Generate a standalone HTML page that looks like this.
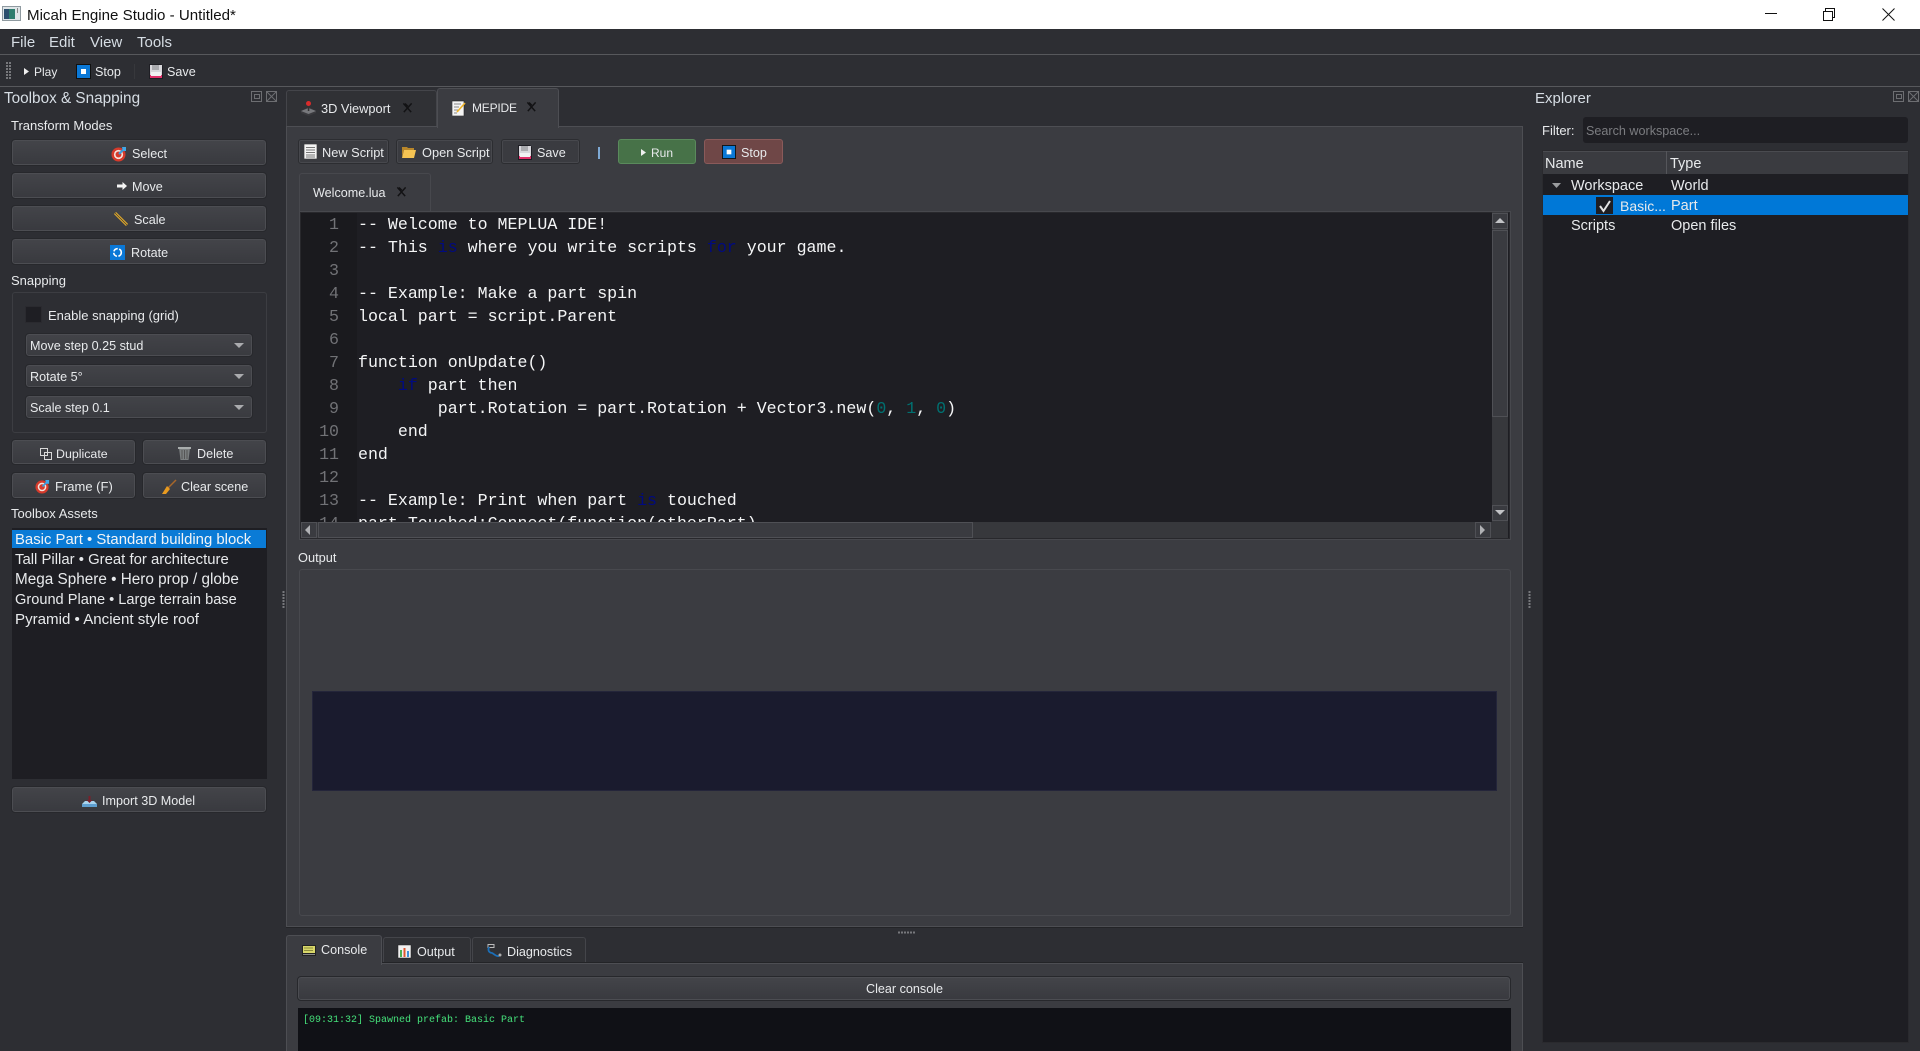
<!DOCTYPE html>
<html><head><meta charset="utf-8"><title>Micah Engine Studio</title>
<style>
html,body{margin:0;padding:0;width:1920px;height:1051px;overflow:hidden;background:#2d2e33}
body{position:relative;font-family:"Liberation Sans",sans-serif;font-size:12.6px;color:#e8eaec}
.b,.t,.i{position:absolute;box-sizing:border-box}
.t{white-space:nowrap;line-height:20px;height:20px;margin-top:1px}
.l{font-size:13px}
.btn{position:absolute;box-sizing:border-box;border:1px solid #4c4d52;border-radius:3px;background:linear-gradient(#434449,#393a3f);outline:1px solid #27282c}
.btn.f{border-color:#2c2d31;box-shadow:inset 0 0 0 1px #47484d;outline:0}
.combo{position:absolute;box-sizing:border-box;left:26px;width:226px;height:22px;border:1px solid #4c4d52;border-radius:3px;background:linear-gradient(#424348,#3a3b40);outline:1px solid #27282c}
.arrow{position:absolute;left:234px;width:0;height:0;border-left:5px solid transparent;border-right:5px solid transparent;border-top:5px solid #aaabae}
.sb{position:absolute;box-sizing:border-box;background:#3a3b40;border:1px solid #4f5055}
svg{position:absolute;overflow:visible}
pre{margin:0;font-family:"Liberation Mono",monospace}
</style></head><body>
<svg width="0" height="0" style="position:absolute"><defs>
<symbol id="target" viewBox="0 0 16 16"><circle cx="7.5" cy="8.5" r="7" fill="#d63a2b"/><circle cx="7.5" cy="8.5" r="4.6" fill="#f3e3dc"/><circle cx="7.5" cy="8.5" r="3" fill="#d63a2b"/><path d="M8 8L13 3" stroke="#3a9ad9" stroke-width="2"/><path d="M11 1h4v4h-3z" fill="#3fa7e8"/></symbol>
<symbol id="stop" viewBox="0 0 15 15"><rect width="15" height="15" fill="#111"/><rect x="1" y="1" width="13" height="13" fill="#0a78d7"/><rect x="5" y="5" width="5" height="5" fill="#fff"/></symbol>
<symbol id="save" viewBox="0 0 14 15"><path d="M0 0h12l2 2v13H0z" fill="#1e1e24"/><rect x="1" y="1" width="12" height="13" fill="#d8d8dc"/><rect x="3" y="1" width="7" height="5" fill="#a9aaae"/><rect x="1" y="11" width="12" height="3" fill="#e0306a"/><rect x="2" y="8" width="10" height="4" fill="#f1f1f3"/></symbol>
<symbol id="doc" viewBox="0 0 13 15"><rect width="13" height="15" fill="#f4f4f4" stroke="#222" stroke-width=".6"/><path d="M2 3.5h9M2 6h9M2 8.5h9M2 11h9M2 13h9" stroke="#777" stroke-width="1"/></symbol>
<symbol id="folder" viewBox="0 0 14 12"><path d="M0 1h5l1 1h6v2H2L0 11z" fill="#b8862a"/><path d="M2 4h12l-2 8H0z" fill="#f6c453"/></symbol>
<symbol id="joy" viewBox="0 0 15 15"><path d="M0 10l7.500-4 7.500 4v2l-7.500 3L0 12z" fill="#3a3a3e"/><path d="M0 10l7.500-3 7.500 3-7.500 3z" fill="#77787c"/><rect x="6.800" y="3" width="1.500" height="7" fill="#333"/><circle cx="7.500" cy="2.500" r="2.500" fill="#d92b2b"/></symbol>
<symbol id="memo" viewBox="0 0 14 16"><rect y="1" width="12" height="15" fill="#f4f4f4" stroke="#222" stroke-width=".6"/><path d="M2 4h7M2 7h5M2 10h4M2 13h3" stroke="#888"/><path d="M5 12L13 3" stroke="#f0b429" stroke-width="1.600"/></symbol>
<symbol id="pin" viewBox="0 0 12 12"><path d="M1.500 1.500L10 11M2 11L10.500 1.500" stroke="#121214" stroke-width="1.600" fill="none"/><path d="M6 5L3 2" stroke="#121214" stroke-width="2.400"/></symbol>
</defs></svg>

<!-- title bar -->
<div class="b" style="left:0;top:0;width:1920px;height:29px;background:#fff"></div>
<svg style="left:2px;top:6px" width="19" height="15"><rect x=".5" y=".5" width="18" height="14" fill="#dfe5e8" stroke="#8f9aa0"/><rect x="2" y="3" width="11" height="10" fill="#2e7d6e"/><rect x="2" y="3" width="5" height="10" fill="#2c4f6e"/><rect x="15" y="2" width="1" height="5" fill="#888"/></svg>
<div class="t" style="left:27px;top:5px;color:#111;font-size:15.100px">Micah Engine Studio - Untitled*</div>
<svg style="left:1765px;top:8px" width="130" height="13" fill="none" stroke="#111"><path d="M0 5.500H12"/><path d="M58.500 3.500h9v9h-9zM60.500 3V.5h9v9H68"/><path d="M117.500.5l12 12M129.500.5l-12 12"/></svg>

<!-- menu -->
<div class="b" style="left:0;top:54px;width:1920px;height:1px;background:#57585c"></div>
<div class="t" style="left:11px;top:32px;font-size:15px;color:#d6dde4">File</div>
<div class="t" style="left:49px;top:32px;font-size:15px;color:#d6dde4">Edit</div>
<div class="t" style="left:90px;top:32px;font-size:15px;color:#d6dde4">View</div>
<div class="t" style="left:137px;top:32px;font-size:15px;color:#d6dde4">Tools</div>

<!-- toolbar -->
<div class="b" style="left:0;top:86px;width:1920px;height:1px;background:#57585c"></div>
<svg style="left:6px;top:62px" width="6" height="17"><path d="M1 0v17M4 0v17" stroke="#77787c" stroke-width="2" stroke-dasharray="2 1"/></svg>
<svg style="left:24px;top:68px" width="6" height="7"><path d="M0 0l5 3.500L0 7z" fill="#f0f0f0"/></svg>
<div class="t" style="left:34px;top:61px;font-size:12px">Play</div>
<svg style="left:76px;top:64px" width="15" height="15"><use href="#stop"/></svg>
<div class="t" style="left:95px;top:61px">Stop</div>
<div class="b" style="left:134px;top:64px;width:1px;height:15px;background:#37383c"></div>
<svg style="left:149px;top:64px" width="14" height="15"><use href="#save"/></svg>
<div class="t" style="left:167px;top:61px">Save</div>

<!-- left dock -->
<div class="t" style="left:4px;top:88px;font-size:15.300px;color:#d6dde4">Toolbox &amp; Snapping</div>
<svg style="left:251px;top:91px" width="26" height="12" fill="none" stroke="#6d6e72"><path d="M.5 .5h10v10H.5zM3.500 3.500h5v4h-5z"/><path d="M15.500 .5h10v10h-10zM16 1l9 9M25 1l-9 9"/></svg>
<div class="t l" style="left:11px;top:115px">Transform Modes</div>
<div class="btn" style="left:12px;top:140px;width:254px;height:25px"></div>
<svg style="left:111px;top:146px" width="16" height="16"><use href="#target"/></svg>
<div class="t" style="left:132px;top:143px">Select</div>
<div class="btn" style="left:12px;top:173px;width:254px;height:25px"></div>
<svg style="left:117px;top:182px" width="10" height="8"><path d="M0 2.500h5.500V0L10 4 5.500 8V5.500H0z" fill="#f4f4f4"/></svg>
<div class="t" style="left:132px;top:176px">Move</div>
<div class="btn" style="left:12px;top:206px;width:254px;height:25px"></div>
<svg style="left:114px;top:212px" width="14" height="14"><path d="M1 1l12 12" stroke="#e0a92c" stroke-width="3"/><path d="M1 1l12 12" stroke="#333" stroke-width=".6"/></svg>
<div class="t" style="left:134px;top:209px">Scale</div>
<div class="btn" style="left:12px;top:239px;width:254px;height:25px"></div>
<svg style="left:110px;top:245px" width="15" height="15"><rect width="15" height="15" fill="#0a78d7"/><circle cx="7.500" cy="7.500" r="3.800" fill="none" stroke="#fff" stroke-width="1.600" stroke-dasharray="5 1.500"/></svg>
<div class="t" style="left:131px;top:242px">Rotate</div>

<div class="t l" style="left:11px;top:270px">Snapping</div>
<div class="b" style="left:12px;top:292px;width:255px;height:141px;border:1px solid #3c3d42;border-radius:3px"></div>
<div class="b" style="left:25px;top:306px;width:17px;height:17px;background:#1e1e23;border:1px solid #2a2a2f"></div>
<div class="t l" style="left:48px;top:305px">Enable snapping (grid)</div>
<div class="combo" style="top:334px"></div><div class="t" style="left:30px;top:335px">Move step 0.25 stud</div><div class="arrow" style="top:343px"></div>
<div class="combo" style="top:365px"></div><div class="t" style="left:30px;top:366px">Rotate 5°</div><div class="arrow" style="top:374px"></div>
<div class="combo" style="top:396px"></div><div class="t" style="left:30px;top:397px">Scale step 0.1</div><div class="arrow" style="top:405px"></div>

<div class="btn" style="left:12px;top:440px;width:123px;height:24px"></div>
<svg style="left:40px;top:448px" width="12" height="12" fill="none" stroke="#d8d8d8"><rect x=".5" y=".5" width="7" height="7"/><rect x="4.500" y="4.500" width="7" height="7"/></svg>
<div class="t" style="left:56px;top:443px;font-size:12.400px">Duplicate</div>
<div class="btn" style="left:143px;top:440px;width:123px;height:24px"></div>
<svg style="left:178px;top:446px" width="13" height="14"><path d="M1 2h11l-1.500 12h-8z" fill="#7b7f80"/><rect width="13" height="2" y="1" fill="#a9adad"/><path d="M4 4v9M6.500 4v9M9 4v9" stroke="#555"/></svg>
<div class="t" style="left:197px;top:443px">Delete</div>
<div class="btn" style="left:12px;top:473px;width:123px;height:25px"></div>
<svg style="left:35px;top:479px" width="15" height="15"><use href="#target"/></svg>
<div class="t l" style="left:55px;top:476px">Frame (F)</div>
<div class="btn" style="left:143px;top:473px;width:123px;height:25px"></div>
<svg style="left:162px;top:479px" width="15" height="15"><path d="M14 1L6 9" stroke="#a8672a" stroke-width="1.500"/><path d="M5 7l3 3-4 5H0z" fill="#e89a20"/></svg>
<div class="t" style="left:181px;top:476px">Clear scene</div>

<div class="t l" style="left:11px;top:503px">Toolbox Assets</div>
<div class="b" style="left:12px;top:528px;width:255px;height:251px;background:#1e1e23"></div>
<div class="b" style="left:12px;top:530px;width:254px;height:18px;background:#0a7bd6"></div>
<div class="t" style="left:15px;top:529px;font-size:14.900px;color:#f2f4f6">Basic Part • Standard building block</div>
<div class="t" style="left:15px;top:549px;font-size:14.900px">Tall Pillar • Great for architecture</div>
<div class="t" style="left:15px;top:569px;font-size:15.300px">Mega Sphere • Hero prop / globe</div>
<div class="t" style="left:15px;top:589px;font-size:14.600px">Ground Plane • Large terrain base</div>
<div class="t" style="left:15px;top:609px;font-size:15.100px">Pyramid • Ancient style roof</div>
<div class="btn" style="left:12px;top:787px;width:254px;height:25px"></div>
<svg style="left:82px;top:796px" width="15" height="11"><path d="M0 8h15v3H0z" fill="#5f9fd0"/><path d="M3 5h9l3 3H0z" fill="#a9d4ee"/><rect x="6.500" y="0" width="2" height="6" fill="#7a1f2a"/><path d="M4.500 4h6l-3 3z" fill="#7a1f2a"/></svg>
<div class="t" style="left:102px;top:790px">Import 3D Model</div>

<svg style="left:282px;top:591px" width="3" height="18"><path d="M1.500 0v18" stroke="#77787c" stroke-width="2" stroke-dasharray="2 1"/></svg>

<!-- main tabs -->
<div class="b" style="left:286px;top:90px;width:151px;height:37px;background:#303135;border:1px solid #44454a;border-bottom:0;border-radius:3px 3px 0 0"></div>
<svg style="left:301px;top:101px" width="15" height="15"><use href="#joy"/></svg>
<div class="t" style="left:321px;top:98px;font-size:12.800px">3D Viewport</div>
<svg style="left:402px;top:102px" width="11" height="11"><use href="#pin"/></svg>
<div class="b" style="left:286px;top:126px;width:1237px;height:801px;background:#3b3c41;border:1px solid #4d4e53;box-shadow:0 1px 0 #232427"></div>
<div class="b" style="left:437px;top:88px;width:122px;height:40px;background:#3b3c41;border:1px solid #4d4e53;border-bottom:0;border-radius:3px 3px 0 0"></div>
<svg style="left:452px;top:100px" width="14" height="16"><use href="#memo"/></svg>
<div class="t" style="left:472px;top:97px;font-size:12px;letter-spacing:-.2px">MEPIDE</div>
<svg style="left:526px;top:101px" width="11" height="11"><use href="#pin"/></svg>

<!-- editor toolbar -->
<div class="btn f" style="left:298px;top:139px;width:91px;height:25px;background:#3a3b40"></div>
<svg style="left:304px;top:144px" width="13" height="15"><use href="#doc"/></svg>
<div class="t" style="left:322px;top:142px;font-size:12.800px">New Script</div>
<div class="btn f" style="left:396px;top:139px;width:97px;height:25px;background:#3a3b40"></div>
<svg style="left:402px;top:146px" width="14" height="12"><use href="#folder"/></svg>
<div class="t" style="left:422px;top:142px;font-size:12.800px">Open Script</div>
<div class="btn f" style="left:501px;top:139px;width:79px;height:25px;background:#3a3b40"></div>
<svg style="left:518px;top:145px" width="14" height="15"><use href="#save"/></svg>
<div class="t" style="left:537px;top:142px">Save</div>
<div class="b" style="left:598px;top:147px;width:2px;height:12px;background:#7ea9d4"></div>
<div class="btn" style="left:618px;top:139px;width:78px;height:25px;background:#477248;border-color:#5a8a5c;outline:0"></div>
<svg style="left:641px;top:149px" width="6" height="7"><path d="M0 0l5 3.500L0 7z" fill="#f0f0f0"/></svg>
<div class="t" style="left:651px;top:142px;font-size:12px">Run</div>
<div class="btn" style="left:704px;top:139px;width:79px;height:25px;background:#6f4747;border-color:#8a5a5a;outline:0"></div>
<svg style="left:722px;top:145px" width="14" height="14"><use href="#stop"/></svg>
<div class="t" style="left:741px;top:142px">Stop</div>

<!-- inner tab -->
<div class="b" style="left:299px;top:173px;width:132px;height:39px;background:#3b3c41;border:1px solid #47484d;border-bottom:0;border-radius:3px 3px 0 0"></div>
<div class="t" style="left:313px;top:182px">Welcome.lua</div>
<svg style="left:396px;top:186px" width="11" height="11"><use href="#pin"/></svg>

<!-- editor -->
<div class="b" style="left:299px;top:211px;width:1212px;height:329px;background:#1e1e23;border:1px solid #47484d;box-shadow:inset 0 0 0 1px #28282c;overflow:hidden">
<div class="b" style="left:1px;top:1px;width:56px;height:310px;background:#1a1a1e"></div>
<pre class="b" style="left:1px;top:1px;width:38px;height:310px;overflow:hidden;text-align:right;font-size:16.600px;line-height:23px;color:#717276">1
2
3
4
5
6
7
8
9
10
11
12
13
14</pre>
<pre class="b" style="left:58px;top:1px;width:1130px;height:309px;overflow:hidden;font-size:16.630px;line-height:23px;color:#f4f5f6">-- Welcome to MEPLUA IDE!
-- This <span style="color:#000a80">is</span> where you write scripts <span style="color:#000a80">for</span> your game.

-- Example: Make a part spin
local part = script.Parent

function onUpdate()
    <span style="color:#000a80">if</span> part then
        part.Rotation = part.Rotation + Vector3.new(<span style="color:#007070">0</span>, <span style="color:#007070">1</span>, <span style="color:#007070">0</span>)
    end
end

-- Example: Print when part <span style="color:#000a80">is</span> touched
part.Touched:Connect(function(otherPart)</pre>
</div>
<!-- scrollbars -->
<div class="b" style="left:301px;top:522px;width:1207px;height:16px;background:#37383c"></div>
<div class="b" style="left:1492px;top:212px;width:16px;height:310px;background:#37383c"></div>
<div class="sb" style="left:301px;top:522px;width:16px;height:16px"></div>
<svg style="left:305px;top:525px" width="6" height="10"><path d="M5 0v10L0 5z" fill="#b0b1b4"/></svg>
<div class="sb" style="left:318px;top:522px;width:655px;height:16px"></div>
<div class="sb" style="left:1475px;top:522px;width:16px;height:16px"></div>
<svg style="left:1480px;top:525px" width="6" height="10"><path d="M0 0v10L5 5z" fill="#b0b1b4"/></svg>
<div class="sb" style="left:1492px;top:213px;width:16px;height:16px"></div>
<svg style="left:1495px;top:218px" width="10" height="6"><path d="M0 5h10L5 0z" fill="#c2c3c6"/></svg>
<div class="sb" style="left:1492px;top:230px;width:16px;height:187px"></div>
<div class="sb" style="left:1492px;top:505px;width:16px;height:16px"></div>
<svg style="left:1495px;top:510px" width="10" height="6"><path d="M0 0h10L5 5z" fill="#c2c3c6"/></svg>

<!-- output -->
<div class="t l" style="left:298px;top:547px;font-size:12.800px">Output</div>
<div class="b" style="left:299px;top:569px;width:1212px;height:347px;border:1px solid #48494e;border-radius:3px"></div>
<div class="b" style="left:312px;top:691px;width:1185px;height:100px;background:#1a1b2e;border:1px solid #24253a"></div>

<svg style="left:898px;top:931px" width="18" height="3"><path d="M0 1.500h18" stroke="#77787c" stroke-width="2" stroke-dasharray="2 1"/></svg>
<svg style="left:1528px;top:591px" width="3" height="18"><path d="M1.500 0v18" stroke="#77787c" stroke-width="2" stroke-dasharray="2 1"/></svg>

<!-- bottom tabs -->
<div class="b" style="left:383px;top:937px;width:88px;height:27px;background:#303135;border:1px solid #44454a;border-bottom:0;border-radius:3px 3px 0 0"></div>
<div class="b" style="left:472px;top:937px;width:114px;height:27px;background:#303135;border:1px solid #44454a;border-bottom:0;border-radius:3px 3px 0 0"></div>
<div class="b" style="left:286px;top:963px;width:1237px;height:90px;background:#3b3c41;border:1px solid #4d4e53;box-shadow:0 -1px 0 #232427"></div>
<div class="b" style="left:286px;top:935px;width:96px;height:30px;background:#3b3c41;border:1px solid #4d4e53;border-bottom:0;border-radius:3px 3px 0 0"></div>
<svg style="left:302px;top:945px" width="14" height="11"><rect width="14" height="11" fill="#222"/><rect x="1" y="1" width="12" height="7" fill="#d9d86a"/><path d="M2 3h9M2 5.500h9" stroke="#8c8c3a"/><rect x="1" y="9" width="12" height="1" fill="#888"/></svg>
<div class="t" style="left:321px;top:939px">Console</div>
<svg style="left:398px;top:945px" width="13" height="13"><rect width="13" height="13" fill="#f0f0f0" stroke="#222" stroke-width=".5"/><rect x="2" y="5" width="2" height="7" fill="#4caf50"/><rect x="5.500" y="3" width="2" height="9" fill="#e0572e"/><rect x="9" y="6" width="2" height="6" fill="#3f8fd6"/></svg>
<div class="t" style="left:417px;top:941px">Output</div>
<svg style="left:487px;top:944px" width="15" height="15" fill="none"><rect x="1" y="0.500" width="6" height="3" stroke="#bbb"/><path d="M2 3c-2 5 2 6 3 6s4 4 7 3" stroke="#1b6fb8" stroke-width="1.800"/><circle cx="13" cy="11" r="1.500" fill="#aaa"/></svg>
<div class="t" style="left:507px;top:941px">Diagnostics</div>

<div class="btn" style="left:298px;top:977px;width:1212px;height:23px"></div>
<div class="t" style="left:866px;top:978px">Clear console</div>
<div class="b" style="left:298px;top:1008px;width:1213px;height:43px;background:#101116"></div>
<pre class="t" style="left:303px;top:1010px;font-size:10px;color:#45e07a">[09:31:32] Spawned prefab: Basic Part</pre>

<!-- right dock -->
<div class="t" style="left:1535px;top:88px;font-size:15px;color:#d6dde4">Explorer</div>
<svg style="left:1893px;top:91px" width="26" height="12" fill="none" stroke="#6d6e72"><path d="M.5 .5h10v10H.5zM3.500 3.500h5v4h-5z"/><path d="M15.500 .5h10v10h-10zM16 1l9 9M25 1l-9 9"/></svg>
<div class="t" style="left:1542px;top:120px;font-size:13px">Filter:</div>
<div class="b" style="left:1583px;top:117px;width:325px;height:26px;background:#1e1e23;border-radius:3px"></div>
<div class="t" style="left:1586px;top:120px;color:#7b7c80">Search workspace...</div>
<div class="b" style="left:1542px;top:150px;width:367px;height:893px;background:#1e1e23;border:1px solid #2a2a2e"></div>
<div class="b" style="left:1543px;top:151px;width:365px;height:23px;background:#3a3b40;border-top:1px solid #4a4b50"></div>
<div class="b" style="left:1666px;top:151px;width:1px;height:23px;background:#55565b"></div>
<div class="t" style="left:1545px;top:153px;font-size:14.500px">Name</div>
<div class="t" style="left:1670px;top:153px;font-size:14.500px">Type</div>
<svg style="left:1552px;top:183px" width="9" height="5"><path d="M0 0h9L4.500 5z" fill="#9b9c9f"/></svg>
<div class="t" style="left:1571px;top:175px;font-size:14.500px">Workspace</div>
<div class="t" style="left:1671px;top:175px;font-size:14.500px">World</div>
<div class="b" style="left:1543px;top:195px;width:365px;height:20px;background:#0078d7"></div>
<div class="b" style="left:1596px;top:197px;width:17px;height:17px;background:#1e1e23"></div>
<svg style="left:1599px;top:200px" width="12" height="12"><path d="M1 6l3.500 5L11 1" fill="none" stroke="#e4e4e4" stroke-width="2"/></svg>
<div class="t" style="left:1620px;top:195px;font-size:14px">Basic...</div>
<div class="t" style="left:1671px;top:195px;font-size:14.500px">Part</div>
<div class="t" style="left:1571px;top:215px;font-size:14.500px">Scripts</div>
<div class="t" style="left:1671px;top:215px;font-size:14.500px">Open files</div>
</body></html>
